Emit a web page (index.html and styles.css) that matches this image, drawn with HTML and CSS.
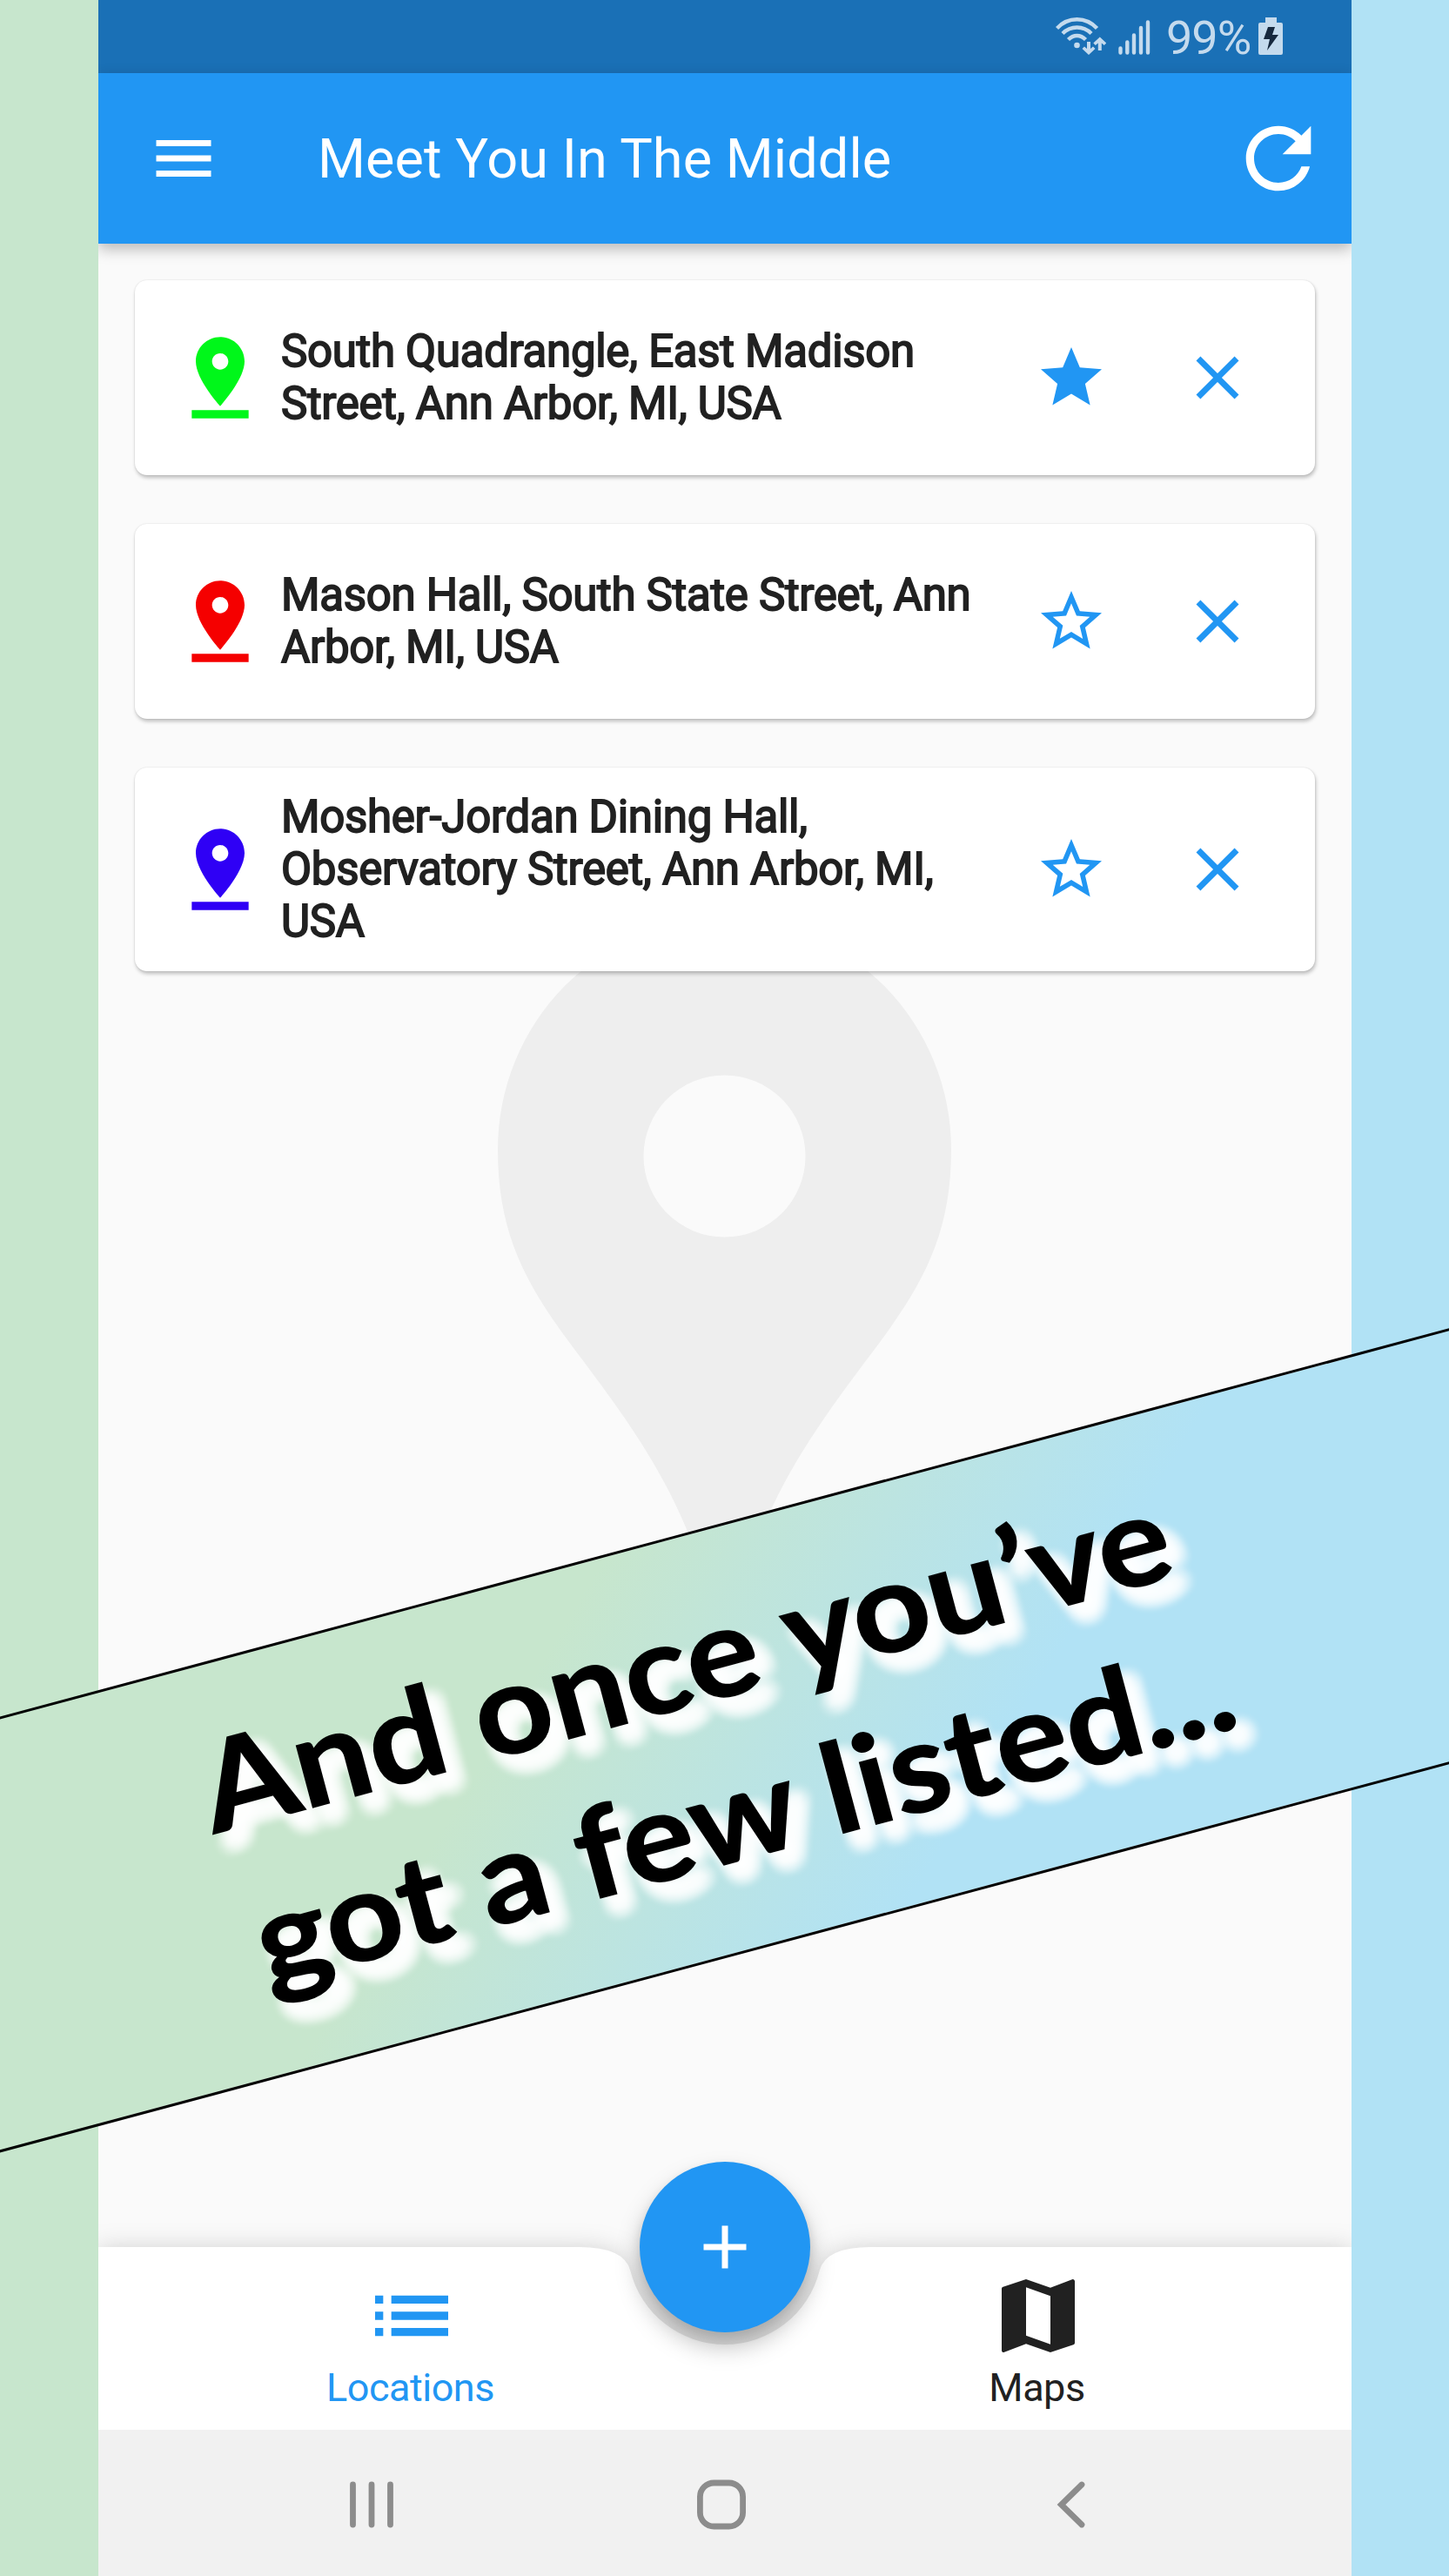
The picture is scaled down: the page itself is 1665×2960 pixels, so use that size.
FILE: index.html
```html
<!DOCTYPE html>
<html lang="en">
<head>
<meta charset="utf-8">
<title>Meet You In The Middle</title>
<link rel="stylesheet" href="styles.css">
</head>
<body>
<div class="poster">
  <main class="phone">
    <div class="status">
      <svg class="status-wifi" viewBox="0 0 58 44"><g fill="none" stroke="currentColor" stroke-width="4.4"><path d="M1.500 12.500Q11 2.200 24.500 2.200T47.500 12.500"/><path d="M8 18.500Q15 11.500 24.500 11.500T41 18.500"/><path d="M14.500 25.500Q19 21 24.500 21T34.500 25.500"/></g><circle cx="24.500" cy="32" r="3.300" fill="currentColor"/><path fill="currentColor" d="M36 28h4v8l3-2.500 2.500 2.500L38 43l-7.500-7 2.500-2.500 3 2.500zM48.800 38h4v-8.500l3 2.500 2.500-2.500-7.500-7-7.500 7 2.500 2.500 3-2.500z"/></svg>
      <svg class="status-signal" viewBox="0 0 37 40"><path fill="none" stroke="currentColor" stroke-width="4.400" stroke-linecap="round" d="M2.500 32.500v5M10.300 25.500v12M18 17.500v20M26 9v28.500M34 2.500v35"/></svg>
      <span class="status-level">99%</span>
      <svg class="status-battery" viewBox="0 0 28 43"><path fill="currentColor" d="M8 0h13v6h5q2 0 2 2v33q0 2-2 2H2q-2 0-2-2V8q0-2 2-2h6z"/><path fill="#16283e" d="M11 11h8l-3 9h7L10 38l3-13H6z"/></svg>
    </div>
    <header class="appbar">
      <svg class="icon menu" viewBox="0 0 24 24"><path d="M3 18h18v-2H3v2zm0-5h18v-2H3v2zm0-7v2h18V6H3z"/></svg>
      <h1 class="title">Meet You In The Middle</h1>
      <svg class="icon icon-lg" viewBox="0 0 24 24"><path d="M17.650 6.350C16.200 4.900 14.210 4 12 4c-4.420 0-7.990 3.580-7.990 8s3.570 8 7.990 8c3.730 0 6.840-2.550 7.730-6h-2.080c-.82 2.330-3.040 4-5.650 4-3.310 0-6-2.690-6-6s2.690-6 6-6c1.660 0 3.140.69 4.220 1.780L13 11h7V4l-2.350 2.350z"/></svg>
    </header>
    <section class="content">
      <svg class="watermark" viewBox="0 0 522 800"><path fill="#eee" fill-rule="evenodd" d="M0 265A260.500 265 0 0 1 521 265C521 364 487.500 422 431 497C374.500 572 335.500 626 302.800 704L260.500 794L218.200 704C185.500 626 146.500 572 90 497C33.500 422 0 364 0 265ZM167.500 272.500a93 93 0 1 0 186 0a93 93 0 1 0 -186 0Z"/></svg>
      <article class="card">
        <svg class="icon icon-lg pin-green" viewBox="0 0 24 24"><path d="M18 8c0-3.310-2.690-6-6-6S6 4.690 6 8c0 4.500 6 11 6 11s6-6.500 6-11zm-8 0c0-1.100.9-2 2-2s2 .9 2 2-.89 2-2 2c-1.100 0-2-.9-2-2zM5 20v2h14v-2H5z"/></svg>
        <p class="address">South Quadrangle, East Madison<br>Street, Ann Arbor, MI, USA</p>
        <svg class="icon action" viewBox="0 0 24 24"><path d="M12 17.270L18.180 21l-1.640-7.030L22 9.240l-7.190-.61L12 2 9.190 8.630 2 9.240l5.460 4.730L5.820 21z"/></svg>
        <svg class="icon action" viewBox="0 0 24 24"><path d="M19 6.410L17.590 5 12 10.590 6.410 5 5 6.410 10.590 12 5 17.590 6.410 19 12 13.410 17.590 19 19 17.590 13.410 12z"/></svg>
      </article>
      <article class="card">
        <svg class="icon icon-lg pin-red" viewBox="0 0 24 24"><path d="M18 8c0-3.310-2.690-6-6-6S6 4.690 6 8c0 4.500 6 11 6 11s6-6.500 6-11zm-8 0c0-1.100.9-2 2-2s2 .9 2 2-.89 2-2 2c-1.100 0-2-.9-2-2zM5 20v2h14v-2H5z"/></svg>
        <p class="address">Mason Hall, South State Street, Ann<br>Arbor, MI, USA</p>
        <svg class="icon action" viewBox="0 0 24 24"><path d="M22 9.240l-7.190-.62L12 2 9.190 8.630 2 9.240l5.460 4.730L5.820 21 12 17.270 18.180 21l-1.630-7.030L22 9.240zM12 15.400l-3.760 2.270 1-4.280-3.320-2.880 4.380-.38L12 6.100l1.710 4.040 4.380.38-3.320 2.880 1 4.280L12 15.400z"/></svg>
        <svg class="icon action" viewBox="0 0 24 24"><path d="M19 6.410L17.590 5 12 10.590 6.410 5 5 6.410 10.590 12 5 17.590 6.410 19 12 13.410 17.590 19 19 17.590 13.410 12z"/></svg>
      </article>
      <article class="card card-tall">
        <svg class="icon icon-lg pin-blue" viewBox="0 0 24 24"><path d="M18 8c0-3.310-2.690-6-6-6S6 4.690 6 8c0 4.500 6 11 6 11s6-6.500 6-11zm-8 0c0-1.100.9-2 2-2s2 .9 2 2-.89 2-2 2c-1.100 0-2-.9-2-2zM5 20v2h14v-2H5z"/></svg>
        <p class="address">Mosher-Jordan Dining Hall,<br>Observatory Street, Ann Arbor, MI,<br>USA</p>
        <svg class="icon action" viewBox="0 0 24 24"><path d="M22 9.240l-7.190-.62L12 2 9.190 8.630 2 9.240l5.460 4.730L5.820 21 12 17.270 18.180 21l-1.630-7.030L22 9.240zM12 15.400l-3.760 2.270 1-4.280-3.320-2.880 4.380-.38L12 6.100l1.710 4.040 4.380.38-3.320 2.880 1 4.280L12 15.400z"/></svg>
        <svg class="icon action" viewBox="0 0 24 24"><path d="M19 6.410L17.590 5 12 10.590 6.410 5 5 6.410 10.590 12 5 17.590 6.410 19 12 13.410 17.590 19 19 17.590 13.410 12z"/></svg>
      </article>
    </section>
    <nav class="tabs">
      <svg class="tabs-shape" viewBox="0 0 1440 210"><path fill="#fff" d="M0 0H552Q604.500 0 611.400 27.400A112 112 0 0 0 828.600 27.400Q835.500 0 888 0H1440V210H0Z"/></svg>
      <a class="tab tab-active"><svg class="icon icon-lg" viewBox="0 0 24 24"><path d="M3 13h2v-2H3v2zm0 4h2v-2H3v2zm0-8h2V7H3v2zm4 4h14v-2H7v2zm0 4h14v-2H7v2zM7 7v2h14V7H7z"/></svg><span>Locations</span></a>
      <a class="tab"><svg class="icon icon-lg" viewBox="0 0 24 24"><path d="M20.500 3l-.16.03L15 5.100 9 3 3.360 4.900c-.21.07-.36.25-.36.48V20.500c0 .28.22.5.5.5l.16-.03L9 18.900l6 2.100 5.640-1.900c.21-.07.36-.25.36-.48V3.500c0-.28-.22-.5-.5-.5zM15 19l-6-2.110V5l6 2.110V19z"/></svg><span>Maps</span></a>
      <button class="fab" aria-label="Add"><svg class="icon" viewBox="0 0 24 24"><path d="M19 13h-6v6h-2v-6H5v-2h6V5h2v6h6v2z"/></svg></button>
    </nav>
    <footer class="sysnav">
      <svg viewBox="0 0 60 60"><path d="M8.500 7v46M30 7v46M51.500 7v46" /></svg>
      <svg viewBox="0 0 60 60"><rect x="5.400" y="5" width="49.200" height="50" rx="16"/></svg>
      <svg viewBox="0 0 60 60"><path d="M42 7L18.500 30L42 53"/></svg>
    </footer>
  </main>
  <div class="banner">
    <p class="slogan"><span class="line line-one">And once you’ve</span><span class="line line-two">got a few listed...</span></p>
  </div>
</div>
</body>
</html>
```
FILE: styles.css
```css
* { box-sizing: border-box; }
body { margin: 0; font-family: Roboto, sans-serif; }
h1, p { margin: 0; }

.poster {
  position: relative;
  width: 1665px;
  height: 2960px;
  padding: 0 112px 0 113px;
  overflow: hidden;
  background: linear-gradient(90deg, #c7e6cd 25%, #b1e2f5 75%);
}
.phone {
  display: flex;
  flex-direction: column;
  width: 1440px;
  height: 2960px;
  overflow: hidden;
  background: #fafafa;
}
.icon { display: block; flex: none; width: 84px; height: 84px; fill: currentColor; }
.icon-lg { width: 112px; height: 112px; }

.status {
  display: flex;
  align-items: flex-start;
  flex: none;
  height: 84px;
  padding: 20px 0 0 1100px;
  background: #1a70b6;
  color: #c4daed;
}
.status-wifi { width: 58px; height: 44px; }
.status-signal { width: 37px; height: 40px; margin: 3px 0 0 14px; }
.status-level { width: 108px; margin-left: 18px; font-size: 54px; line-height: 48px; letter-spacing: -1px; }
.status-battery { width: 28px; height: 43px; margin-left: -2px; }

.appbar {
  position: relative;
  z-index: 2;
  display: flex;
  align-items: center;
  flex: none;
  height: 196px;
  padding: 0 28px 0 56px;
  background: #2196f3;
  color: #fff;
  box-shadow: 0 6px 16px rgba(0, 0, 0, .27);
}
.title { flex: 1; margin: 2px 0 0 112px; font-size: 63px; font-weight: 400; line-height: 74px; letter-spacing: .06px; white-space: nowrap; }

.content {
  position: relative;
  display: flex;
  flex-direction: column;
  flex: 1;
  gap: 56px;
  padding: 42px;
}
.watermark { position: absolute; left: 459px; top: 776px; width: 522px; height: 800px; }
.card {
  position: relative;
  display: flex;
  align-items: center;
  flex: none;
  height: 224px;
  padding-left: 42px;
  border-radius: 14px;
  background: #fff;
  color: #212121;
  box-shadow: 1px 3px 4px rgba(0, 0, 0, .24), 0 0 2px rgba(0, 0, 0, .12);
}
.card-tall { height: 234px; }
.pin-green { color: #00f71a; }
.pin-red { color: #f50000; }
.pin-blue { color: #2f00f5; }
.address {
  width: 850px;
  margin: -1px 0 0 14px;
  font-size: 51px;
  line-height: 60px;
  letter-spacing: -.3px;
  white-space: nowrap;
  -webkit-text-stroke: 1.8px #212121;
}
.action { margin-left: 84px; color: #2196f3; }
.address + .action { margin-left: 16px; }

.tabs { position: relative; display: flex; flex: none; height: 210px; }
.tabs-shape { position: absolute; inset: 0; width: 1440px; height: 210px; overflow: visible; filter: drop-shadow(0 1px 14px rgba(0, 0, 0, .17)); }
.tab {
  position: relative;
  display: flex;
  flex-direction: column;
  align-items: center;
  flex: 1;
  padding-top: 23px;
  color: #212121;
  font-size: 45px;
  line-height: 54px;
  letter-spacing: -.5px;
}
.tab span { margin-right: 3px; }
.tab-active { color: #2196f3; }
.fab {
  position: absolute;
  left: 622px;
  top: -98px;
  display: flex;
  align-items: center;
  justify-content: center;
  width: 196px;
  height: 196px;
  padding: 0;
  border: 0;
  border-radius: 50%;
  background: #2196f3;
  color: #fff;
  box-shadow: 0 16px 28px rgba(0, 0, 0, .26), 0 6px 12px rgba(0, 0, 0, .1);
}

.sysnav {
  position: relative;
  display: flex;
  gap: 342px;
  flex: none;
  height: 168px;
  padding: 56px 0 0 284px;
  background: #f1f1f1;
}
.sysnav svg { width: 60px; height: 60px; fill: none; stroke: #8c8c8c; stroke-width: 6.8; stroke-linecap: round; }

.banner {
  position: absolute;
  left: -168px;
  top: 1758px;
  width: 2000px;
  height: 484px;
  border: solid #000;
  border-width: 3px 0;
  background: linear-gradient(136deg, #c7e6cd 37%, #b1e2f5 66%);
  transform: rotate(-15deg);
}
.slogan { padding-top: 43px; font-family: Lato, sans-serif; font-size: 143px; font-weight: 700; line-height: 186px; color: #000; -webkit-text-stroke: 1.5px #000; }
.line {
  display: block;
  width: max-content;
  white-space: nowrap;
  transform-origin: 0 50%;
  text-shadow:
    10px 18px 5px rgba(255, 255, 255, .5),
    20px 18px 8px rgba(255, 255, 255, .4),
    1px 18px 8px rgba(255, 255, 255, .4),
    10px 28px 8px rgba(255, 255, 255, .4),
    10px 9px 8px rgba(255, 255, 255, .4),
    17px 25px 8px rgba(255, 255, 255, .4),
    17px 11px 8px rgba(255, 255, 255, .4),
    4px 25px 8px rgba(255, 255, 255, .4),
    4px 12px 8px rgba(255, 255, 255, .4);
}
.line-one { margin-left: 406px; transform: scaleX(1.092); }
.line-two { margin-left: 421px; transform: scaleX(1.085); }
```
